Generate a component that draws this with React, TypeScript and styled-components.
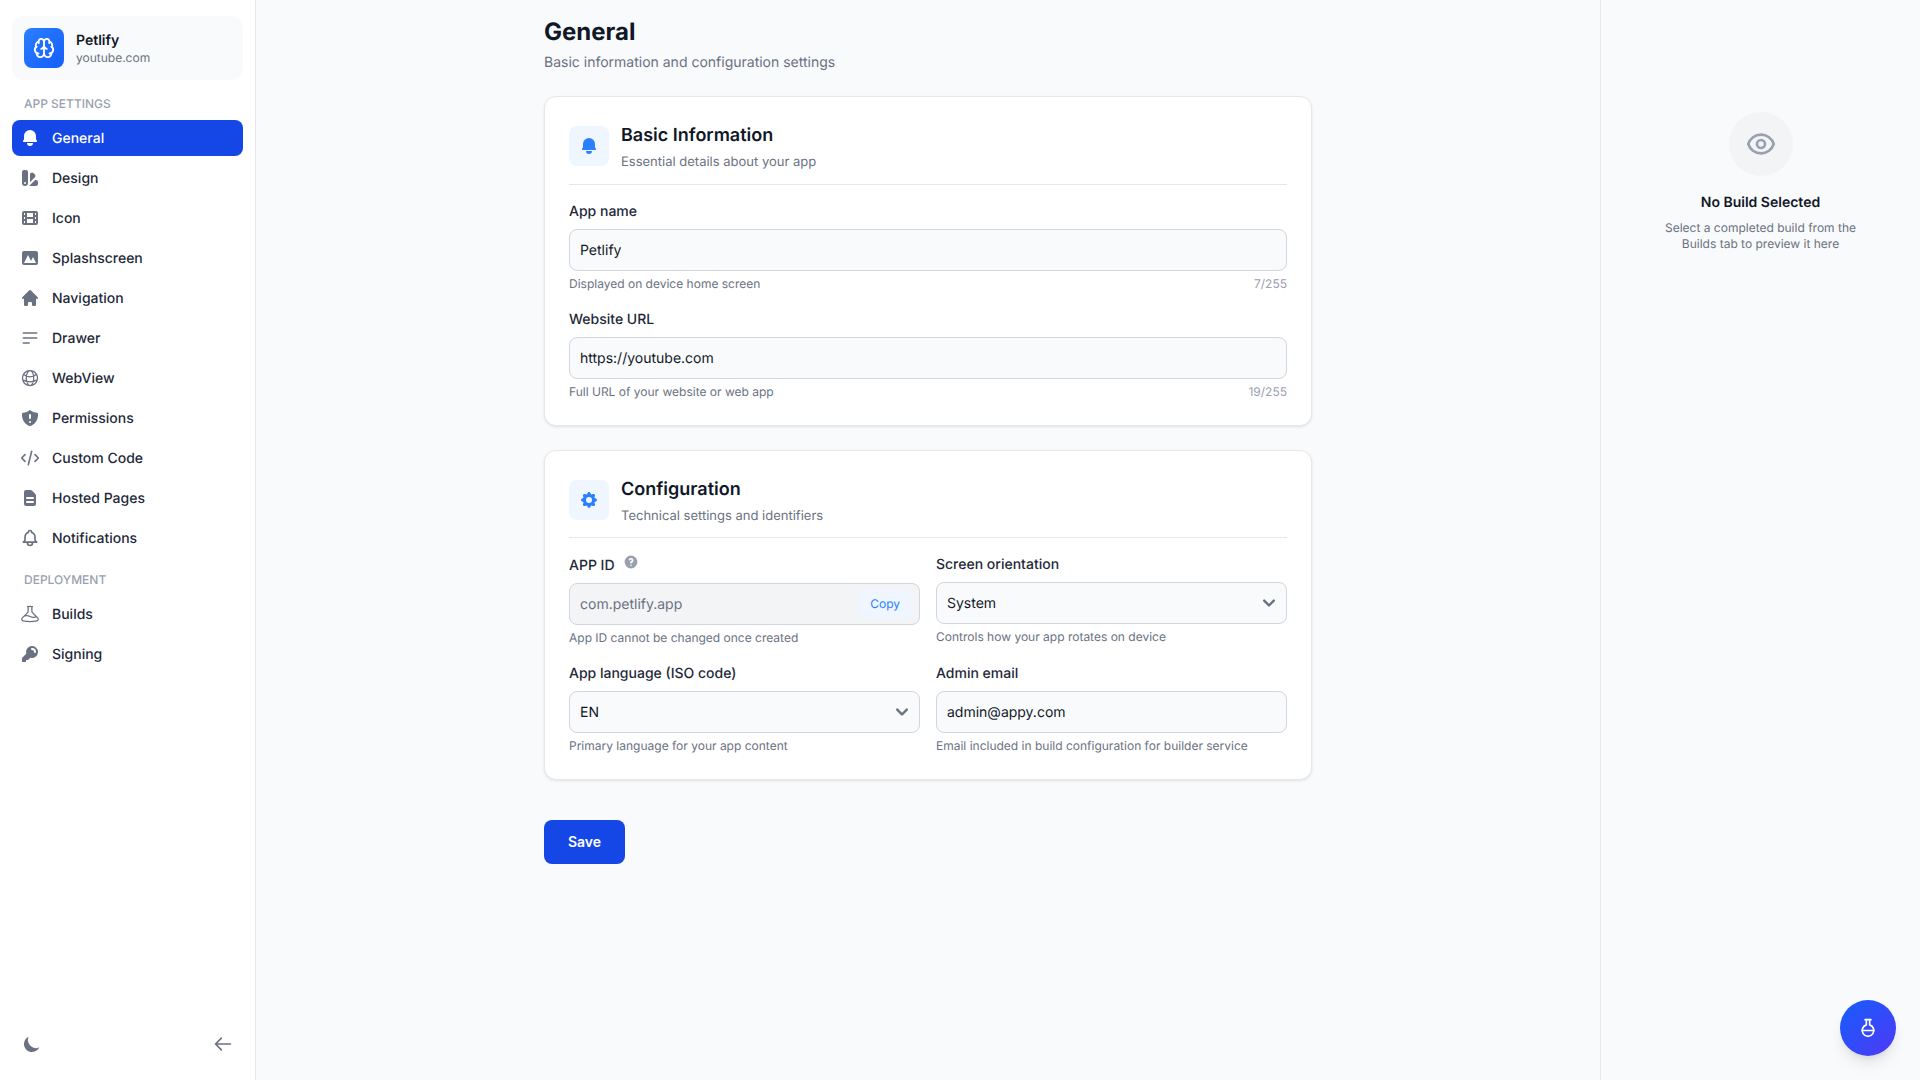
import React from 'react';
import styled, { createGlobalStyle } from 'styled-components';
import {
  HiBell, HiColorSwatch, HiFilm, HiPhotograph, HiHome, HiOutlineMenuAlt2, HiShieldExclamation,
  HiOutlineCode, HiDocumentText, HiOutlineBell, HiKey, HiMoon, HiOutlineArrowLeft, HiCog,
  HiQuestionMarkCircle, HiChevronDown, HiOutlineEye,
} from 'react-icons/hi';
import { HiOutlineGlobeAlt, HiOutlineBeaker } from 'react-icons/hi2';
import { Brain, FlaskRound } from 'lucide-react';

const Global = createGlobalStyle`
  html, body { margin: 0; padding: 0; height: 100%; }
  body { font-family: Inter, "Liberation Sans", sans-serif; background: #f9fafb; color: #101828; overflow: hidden; text-rendering: geometricPrecision; -webkit-font-smoothing: antialiased; }
  * { box-sizing: border-box; }
`;

const Shell = styled.div`display: flex; height: 1080px; position: relative;`;
const Sidebar = styled.aside`
  width: 256px; flex: none; background: #fff; border-right: 1px solid #e5e7eb;
  padding: 16px 12px; display: flex; flex-direction: column;
`;
const Brand = styled.div`
  height: 64px; width: 231px; background: #f9fafb; border-radius: 12px; padding: 12px; display: flex; align-items: center; gap: 12px;
`;
const BrandLogo = styled.div`
  width: 40px; height: 40px; border-radius: 8px; background: linear-gradient(135deg, #2b7fff, #155dfc);
  display: flex; align-items: center; justify-content: center; color: #fff;
`;
const BrandText = styled.div`display: flex; flex-direction: column;`;
const BrandName = styled.div`font-size: 14px; line-height: 22px; font-weight: 600; color: #101828;`;
const BrandUrl = styled.div`font-size: 12px; line-height: 16px; margin-top: -2px; color: #6a7282;`;
const SectionLabel = styled.div<{ $top: number }>`
  font-size: 12px; line-height: 16px; font-weight: 500; color: #99a1af; text-transform: uppercase; padding-left: 12px; margin: ${p => p.$top}px 0 8px;
`;
const Nav = styled.nav`display: flex; flex-direction: column; gap: 4px; width: 231px;`;
const NavItem = styled.div<{ $active?: boolean }>`
  height: 36px; border-radius: 8px; padding: 0 8px; display: flex; align-items: center; gap: 12px;
  font-size: 14px; font-weight: 500; background: ${p => (p.$active ? '#1447e6' : 'transparent')}; color: ${p => (p.$active ? '#fff' : '#1e2939')};
  svg { width: 20px; height: 20px; flex: none; color: ${p => (p.$active ? '#fff' : '#6a7282')}; }
`;
const SidebarFooter = styled.div`
  margin-top: auto; height: 40px; display: flex; align-items: center; justify-content: space-between; padding: 0 10px; color: #6a7282;
  svg { width: 20px; height: 20px; }
`;
const Main = styled.main`flex: 1; display: flex; justify-content: center;`;
const Content = styled.div`width: 768px; padding-top: 16px;`;
const PageHeader = styled.header`margin-bottom: 22px;`;
const PageTitle = styled.h1`margin: 0; font-size: 24px; line-height: 32px; font-weight: 700; color: #101828;`;
const PageSub = styled.p`margin: 4px 0 0; font-size: 14px; line-height: 22px; color: #6a7282;`;
const Cards = styled.div`display: flex; flex-direction: column; gap: 24px;`;
const Card = styled.section`
  background: #fff; border: 1px solid #e5e7eb; border-radius: 12px; padding: 24px;
  box-shadow: 0 1px 3px rgba(0,0,0,.08), 0 1px 2px -1px rgba(0,0,0,.08);
`;
const CardHead = styled.div<{ $pad: number }>`display: flex; align-items: flex-start; gap: 12px; padding-bottom: ${p => p.$pad}px; border-bottom: 1px solid #e5e7eb; margin-bottom: 16px;`;
const CardIcon = styled.div`
  width: 40px; height: 40px; margin-top: 5px; border-radius: 8px; background: #eff6ff; color: #2b7fff; display: flex; align-items: center; justify-content: center;
  svg { width: 20px; height: 20px; }
`;
const CardTitle = styled.h2`margin: 0; font-size: 18px; line-height: 30px; font-weight: 600; color: #101828;`;
const CardSub = styled.p`margin: 1px 0 0; font-size: 13px; line-height: 20px; color: #6a7282;`;
const Field = styled.div`display: flex; flex-direction: column;`;
const Stack = styled.div`display: flex; flex-direction: column; gap: 16px;`;
const Grid = styled.div`display: grid; grid-template-columns: 1fr 1fr; gap: 16px;`;
const Label = styled.label<{ $tall?: boolean }>`
  font-size: 14px; line-height: 22px; font-weight: 500; color: #1e2939; margin-bottom: 6px; display: flex; align-items: center; gap: 8px;
  min-height: ${p => (p.$tall ? 23 : 22)}px;
`;
const Help = styled.span`display: inline-flex; color: #99a1af; position: relative; top: -4px; svg { width: 16px; height: 16px; }`;
const Control = styled.div<{ $disabled?: boolean }>`
  height: 42px; border: 1px solid #d1d5dc; border-radius: 8px; padding: 0 10px; display: flex; align-items: center; justify-content: space-between;
  background: ${p => (p.$disabled ? '#f3f4f6' : '#f9fafb')}; color: ${p => (p.$disabled ? '#6a7282' : '#101828')}; font-size: 14px;
  svg { width: 24px; height: 24px; margin-right: -5px; color: #6a7282; }
`;
const CopyBtn = styled.span`
  font-size: 12px; font-weight: 400; color: #2b7fff; background: #eff6ff; border-radius: 6px; padding: 7px 12px; margin-right: -3px; line-height: 16px;
`;
const HintRow = styled.div`display: flex; justify-content: space-between; margin-top: 4px; font-size: 12px; line-height: 18px; color: #6a7282;`;
const Counter = styled.span`color: #99a1af;`;
const SaveBtn = styled.button`
  margin-top: 40px; height: 44px; width: 81px; border: 0; border-radius: 8px; padding: 0 0 2px; background: #1447e6; color: #fff; font: 600 14px Inter, sans-serif;
`;
const Preview = styled.aside`
  width: 320px; flex: none; border-left: 1px solid #e5e7eb; padding-top: 112px; display: flex; flex-direction: column; align-items: center;
`;
const PreviewCircle = styled.div`
  width: 64px; height: 64px; border-radius: 50%; background: #f3f4f6; color: #99a1af; display: flex; align-items: center; justify-content: center;
  svg { width: 32px; height: 32px; }
`;
const PreviewTitle = styled.div`margin-top: 16px; font-size: 14px; line-height: 22px; font-weight: 600; color: #101828;`;
const PreviewText = styled.div`margin-top: 6px; width: 224px; text-align: center; font-size: 12px; line-height: 16px; color: #6a7282;`;
const Fab = styled.button`
  position: absolute; right: 24px; bottom: 24px; width: 56px; height: 56px; border-radius: 50%; border: 0; color: #fff;
  background: linear-gradient(135deg, #155dfc, #4f39f6); box-shadow: 0 10px 15px -3px rgba(0,0,0,.1), 0 4px 6px -4px rgba(0,0,0,.1);
  display: flex; align-items: center; justify-content: center;
`;

const settings: [React.ComponentType, string][] = [
  [HiBell, 'General'], [HiColorSwatch, 'Design'], [HiFilm, 'Icon'], [HiPhotograph, 'Splashscreen'], [HiHome, 'Navigation'],
  [HiOutlineMenuAlt2, 'Drawer'], [HiOutlineGlobeAlt, 'WebView'], [HiShieldExclamation, 'Permissions'], [HiOutlineCode, 'Custom Code'],
  [HiDocumentText, 'Hosted Pages'], [HiOutlineBell, 'Notifications'],
];
const deployment: [React.ComponentType, string][] = [[HiOutlineBeaker, 'Builds'], [HiKey, 'Signing']];

export default function App() {
  return (
    <Shell>
      <Global />
      <Sidebar>
        <Brand>
          <BrandLogo><Brain size={22} strokeWidth={2} /></BrandLogo>
          <BrandText><BrandName>Petlify</BrandName><BrandUrl>youtube.com</BrandUrl></BrandText>
        </Brand>
        <SectionLabel $top={16}>App Settings</SectionLabel>
        <Nav>
          {settings.map(([I, t], i) => <NavItem key={t} $active={i === 0}><I />{t}</NavItem>)}
        </Nav>
        <SectionLabel $top={16}>Deployment</SectionLabel>
        <Nav>
          {deployment.map(([I, t]) => <NavItem key={t}><I />{t}</NavItem>)}
        </Nav>
        <SidebarFooter><HiMoon /><HiOutlineArrowLeft /></SidebarFooter>
      </Sidebar>
      <Main>
        <Content>
          <PageHeader>
            <PageTitle>General</PageTitle>
            <PageSub>Basic information and configuration settings</PageSub>
          </PageHeader>
          <Cards>
            <Card>
              <CardHead $pad={12}>
                <CardIcon><HiBell /></CardIcon>
                <div><CardTitle>Basic Information</CardTitle><CardSub>Essential details about your app</CardSub></div>
              </CardHead>
              <Stack>
                <Field>
                  <Label>App name</Label>
                  <Control>Petlify</Control>
                  <HintRow><span>Displayed on device home screen</span><Counter>7/255</Counter></HintRow>
                </Field>
                <Field>
                  <Label>Website URL</Label>
                  <Control>https://youtube.com</Control>
                  <HintRow><span>Full URL of your website or web app</span><Counter>19/255</Counter></HintRow>
                </Field>
              </Stack>
            </Card>
            <Card>
              <CardHead $pad={11}>
                <CardIcon><HiCog /></CardIcon>
                <div><CardTitle>Configuration</CardTitle><CardSub>Technical settings and identifiers</CardSub></div>
              </CardHead>
              <Grid>
                <Field>
                  <Label $tall>APP ID <Help><HiQuestionMarkCircle /></Help></Label>
                  <Control $disabled>com.petlify.app<CopyBtn>Copy</CopyBtn></Control>
                  <HintRow><span>App ID cannot be changed once created</span></HintRow>
                </Field>
                <Field>
                  <Label>Screen orientation</Label>
                  <Control>System<HiChevronDown /></Control>
                  <HintRow><span>Controls how your app rotates on device</span></HintRow>
                </Field>
                <Field>
                  <Label>App language (ISO code)</Label>
                  <Control>EN<HiChevronDown /></Control>
                  <HintRow><span>Primary language for your app content</span></HintRow>
                </Field>
                <Field>
                  <Label>Admin email</Label>
                  <Control>admin@appy.com</Control>
                  <HintRow><span>Email included in build configuration for builder service</span></HintRow>
                </Field>
              </Grid>
            </Card>
          </Cards>
          <SaveBtn>Save</SaveBtn>
        </Content>
      </Main>
      <Preview>
        <PreviewCircle><HiOutlineEye /></PreviewCircle>
        <PreviewTitle>No Build Selected</PreviewTitle>
        <PreviewText>Select a completed build from the Builds tab to preview it here</PreviewText>
      </Preview>
      <Fab><FlaskRound size={20} /></Fab>
    </Shell>
  );
}
